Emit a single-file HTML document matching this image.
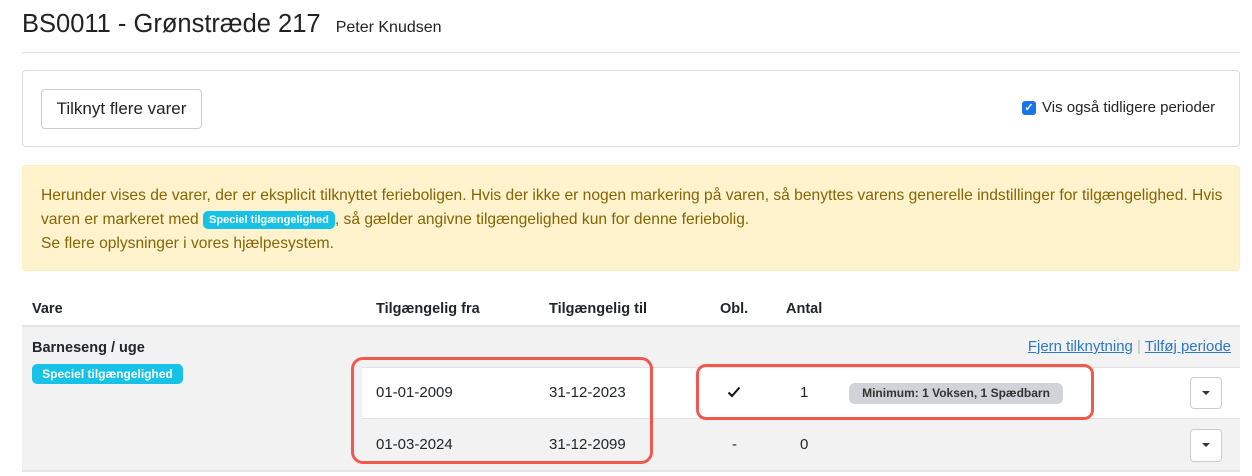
<!DOCTYPE html>
<html><head><meta charset="utf-8"><style>
*{box-sizing:border-box;margin:0;padding:0}
body{width:1252px;height:476px;background:#fff;font-family:"Liberation Sans",sans-serif;color:#212529;position:relative;overflow:hidden}
.a{position:absolute}
</style></head><body>
<div class="a" style="left:22px;top:6px;font-size:25.5px;line-height:36px;color:#222">BS0011 - Grønstræde 217 <span style="font-size:16px;margin-left:8px">Peter Knudsen</span></div>
<div class="a" style="left:22px;top:52px;width:1218px;height:1px;background:#e3e3e3"></div>
<div class="a" style="left:22px;top:70px;width:1218px;height:77px;border:1px solid #dcdcdc;border-radius:4px"></div>
<div class="a" style="left:41px;top:89px;width:161px;height:40px;border:1px solid #ccc;border-radius:4px;font-size:17px;line-height:38px;text-align:center;color:#222">Tilknyt flere varer</div>
<div class="a" style="left:1022px;top:101px;width:14px;height:14px;background:#1a73e8;border-radius:3px;color:#fff;font-size:11px;line-height:14px;text-align:center;font-weight:bold">✓</div>
<div class="a" style="left:1042px;top:99px;font-size:15px;line-height:18px;color:#222">Vis også tidligere perioder</div>
<div class="a" style="left:22px;top:165px;width:1218px;height:106px;background:#fff3cd;border:1px solid #ffeeba;border-radius:4px;color:#856404;font-size:15.6px;line-height:24px;padding:18px 0 18px 18px;white-space:nowrap">Herunder vises de varer, der er eksplicit tilknyttet ferieboligen. Hvis der ikke er nogen markering på varen, så benyttes varens generelle indstillinger for tilgængelighed. Hvis<br>varen er markeret med <span style="display:inline-block;background:#17c2e6;color:#fff;font-size:11px;font-weight:bold;line-height:18px;padding:0 6px;border-radius:5px;vertical-align:1px">Speciel tilgængelighed</span>, så gælder angivne tilgængelighed kun for denne feriebolig.<br>Se flere oplysninger i vores hjælpesystem.</div>
<div class="a" style="left:22px;top:325px;width:1218px;height:2px;background:#e4e4e4"></div>
<div class="a" style="left:22px;top:327px;width:1218px;height:143px;background:#f2f2f2"></div>
<div class="a" style="left:362px;top:367px;width:878px;height:52px;background:#fff;border-top:1px solid #e2e2e2;border-bottom:1px solid #e2e2e2"></div>
<div class="a" style="left:22px;top:470px;width:1218px;height:2px;background:#e4e4e4"></div>
<div class="a" style="top:300px;left:32px;font-size:14.5px;font-weight:bold;line-height:18px">Vare</div>
<div class="a" style="top:300px;left:376px;font-size:14.5px;font-weight:bold;line-height:18px">Tilgængelig fra</div>
<div class="a" style="top:300px;left:549px;font-size:14.5px;font-weight:bold;line-height:18px">Tilgængelig til</div>
<div class="a" style="top:300px;left:720px;font-size:14.5px;font-weight:bold;line-height:18px">Obl.</div>
<div class="a" style="top:300px;left:786px;font-size:14.5px;font-weight:bold;line-height:18px">Antal</div>
<div class="a" style="top:339px;left:32px;font-size:14.5px;font-weight:bold;line-height:18px">Barneseng / uge</div>
<div class="a" style="top:364px;left:32px;height:20px;width:151px;background:#17c2e6;color:#fff;font-size:12px;font-weight:bold;line-height:20px;text-align:center;border-radius:5px">Speciel tilgængelighed</div>
<div class="a" style="top:338px;right:21px;font-size:15px;line-height:18px;color:#2b78c2;white-space:nowrap"><u>Fjern tilknytning</u> <span style="color:#bbb">|</span> <u>Tilføj periode</u></div>
<div class="a" style="top:384px;left:376px;font-size:15px;line-height:18px">01-01-2009</div>
<div class="a" style="top:384px;left:549px;font-size:15px;line-height:18px">31-12-2023</div>
<svg class="a" style="top:386px;left:727px" width="14" height="12" viewBox="0 0 14 12"><path d="M1.5 6.5 L5 10 L12.5 1.5" fill="none" stroke="#111" stroke-width="2"/></svg>
<div class="a" style="top:384px;left:800px;font-size:15px;line-height:18px">1</div>
<div class="a" style="top:383px;left:849px;width:214px;height:21px;background:#d0d4d9;border-radius:6px;font-size:12px;font-weight:bold;line-height:21px;text-align:center;color:#333">Minimum: 1 Voksen, 1 Spædbarn</div>
<div class="a" style="top:436px;left:376px;font-size:15px;line-height:18px">01-03-2024</div>
<div class="a" style="top:436px;left:549px;font-size:15px;line-height:18px">31-12-2099</div>
<div class="a" style="top:436px;left:732px;font-size:15px;line-height:18px">-</div>
<div class="a" style="top:436px;left:800px;font-size:15px;line-height:18px">0</div>
<div class="a" style="top:377px;left:1190px;width:32px;height:32px;background:#fff;border:1px solid #ccc;border-radius:4px"><div style="margin:13px auto 0;width:0;height:0;border-left:4px solid transparent;border-right:4px solid transparent;border-top:4px solid #333"></div></div>
<div class="a" style="top:429px;left:1190px;width:32px;height:33px;background:#fff;border:1px solid #ccc;border-radius:4px"><div style="margin:13px auto 0;width:0;height:0;border-left:4px solid transparent;border-right:4px solid transparent;border-top:4px solid #333"></div></div>
<div class="a" style="left:351px;top:357px;width:302px;height:107px;border:3px solid #f05a4e;border-radius:12px"></div>
<div class="a" style="left:696px;top:364px;width:398px;height:56px;border:3px solid #f05a4e;border-radius:10px"></div>
</body></html>
